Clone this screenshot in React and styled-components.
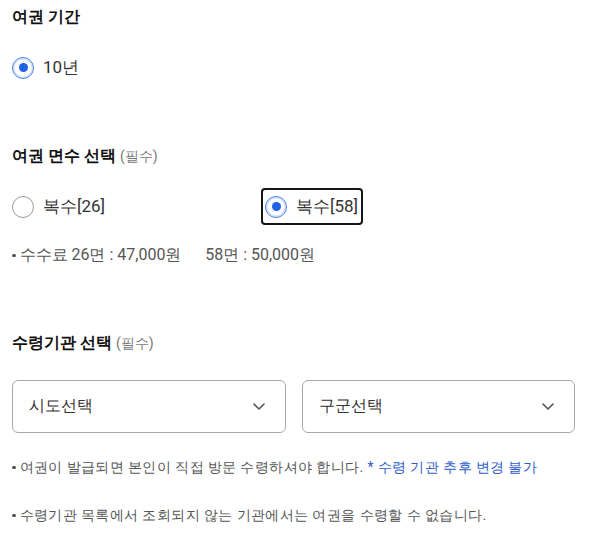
import React from "react";
import styled, { createGlobalStyle } from "styled-components";

const Global = createGlobalStyle`
  html, body { margin: 0; padding: 0; background: #fff; }
  body {
    font-family: Roboto, sans-serif;
    color: #222;
    -webkit-font-smoothing: antialiased;
  }
`;

const Page = styled.div`
  width: 600px;
  box-sizing: border-box;
  padding: 5px 25px 0 12px;
`;

const Heading = styled.h2`
  margin: ${(p) => p.$top || 0}px 0 0;
  font-size: 16px;
  line-height: 24px;
  font-weight: 700;
  color: #111;
`;

const Required = styled.span`
  font-size: 14px;
  font-weight: 400;
  color: #777;
  margin-left: 4px;
`;

const RadioRow = styled.div`
  display: flex;
  align-items: center;
  margin-top: ${(p) => p.$top || 0}px;
`;

const Option = styled.label`
  display: flex;
  align-items: center;
  gap: 9px;
  box-sizing: border-box;
  height: 37px;
  width: ${(p) => (p.$width ? `${p.$width}px` : "auto")};
  padding: ${(p) => (p.$boxed ? "0 3px 0 2px" : "0")};
  border: ${(p) => (p.$boxed ? "2px solid #151515" : "none")};
  border-radius: 4px;
  font-size: 17px;
  color: #333;
  cursor: pointer;
`;

const Circle = styled.span`
  box-sizing: border-box;
  width: 22px;
  height: 22px;
  border-radius: 50%;
  flex: none;
  display: flex;
  align-items: center;
  justify-content: center;
  border: ${(p) => (p.$checked ? "1.5px solid #4a80ee" : "1.5px solid #9a9a9a")};
  box-shadow: ${(p) => (p.$checked ? "inset 0 0 0 1.5px #d3e1fc" : "none")};
  &::after {
    content: "";
    display: ${(p) => (p.$checked ? "block" : "none")};
    width: 9px;
    height: 9px;
    border-radius: 50%;
    background: #1f62e6;
  }
`;

const Note = styled.p`
  margin: ${(p) => p.$top || 0}px 0 0;
  font-size: ${(p) => p.$size || 14}px;
  letter-spacing: ${(p) => p.$spacing || 0}px;
  line-height: 20px;
  color: #555;
  display: flex;
  align-items: center;
  white-space: pre;
  &::before {
    content: "";
    flex: none;
    width: 3.5px;
    height: 3.5px;
    border-radius: 50%;
    background: #555;
    margin: 1px 4px 0 0;
  }
`;

const Blue = styled.span`
  color: #2c5cc9;
`;

const Selects = styled.div`
  display: grid;
  grid-template-columns: 1fr 1fr;
  gap: 16px;
  margin-top: ${(p) => p.$top || 0}px;
`;

const SelectBox = styled.div`
  box-sizing: border-box;
  height: 53px;
  border: 1px solid #a9a9a9;
  border-radius: 6px;
  display: flex;
  align-items: center;
  justify-content: space-between;
  padding: 0 20px 0 16px;
  font-size: 16px;
  color: #333;
`;

const Chevron = () => (
  <svg width="12" height="7" viewBox="0 0 12 7" fill="none">
    <path d="M1 1l5 5 5-5" stroke="#555" strokeWidth="1.6" strokeLinecap="round" strokeLinejoin="round" />
  </svg>
);

export default function App() {
  return (
    <>
      <Global />
      <Page>
        <Heading>여권 기간</Heading>
        <RadioRow $top={20}>
          <Option>
            <Circle $checked />
            10년
          </Option>
        </RadioRow>

        <Heading $top={58}>
          여권 면수 선택<Required>(필수)</Required>
        </Heading>
        <RadioRow $top={20}>
          <Option $width={249}>
            <Circle />
            복수[26]
          </Option>
          <Option $boxed>
            <Circle $checked />
            복수[58]
          </Option>
        </RadioRow>
        <Note $top={20} $size={16}>{"수수료 26면 : 47,000원      58면 : 50,000원"}</Note>

        <Heading $top={66}>
          수령기관 선택<Required>(필수)</Required>
        </Heading>
        <Selects $top={25}>
          <SelectBox>
            시도선택
            <Chevron />
          </SelectBox>
          <SelectBox>
            구군선택
            <Chevron />
          </SelectBox>
        </Selects>
        <Note $top={24} $spacing={0.4}>
          여권이 발급되면 본인이 직접 방문 수령하셔야 합니다. <Blue>* 수령 기관 추후 변경 불가</Blue>
        </Note>
        <Note $top={28} $spacing={0.4}>
          수령기관 목록에서 조회되지 않는 기관에서는 여권을 수령할 수 없습니다.
        </Note>
      </Page>
    </>
  );
}
